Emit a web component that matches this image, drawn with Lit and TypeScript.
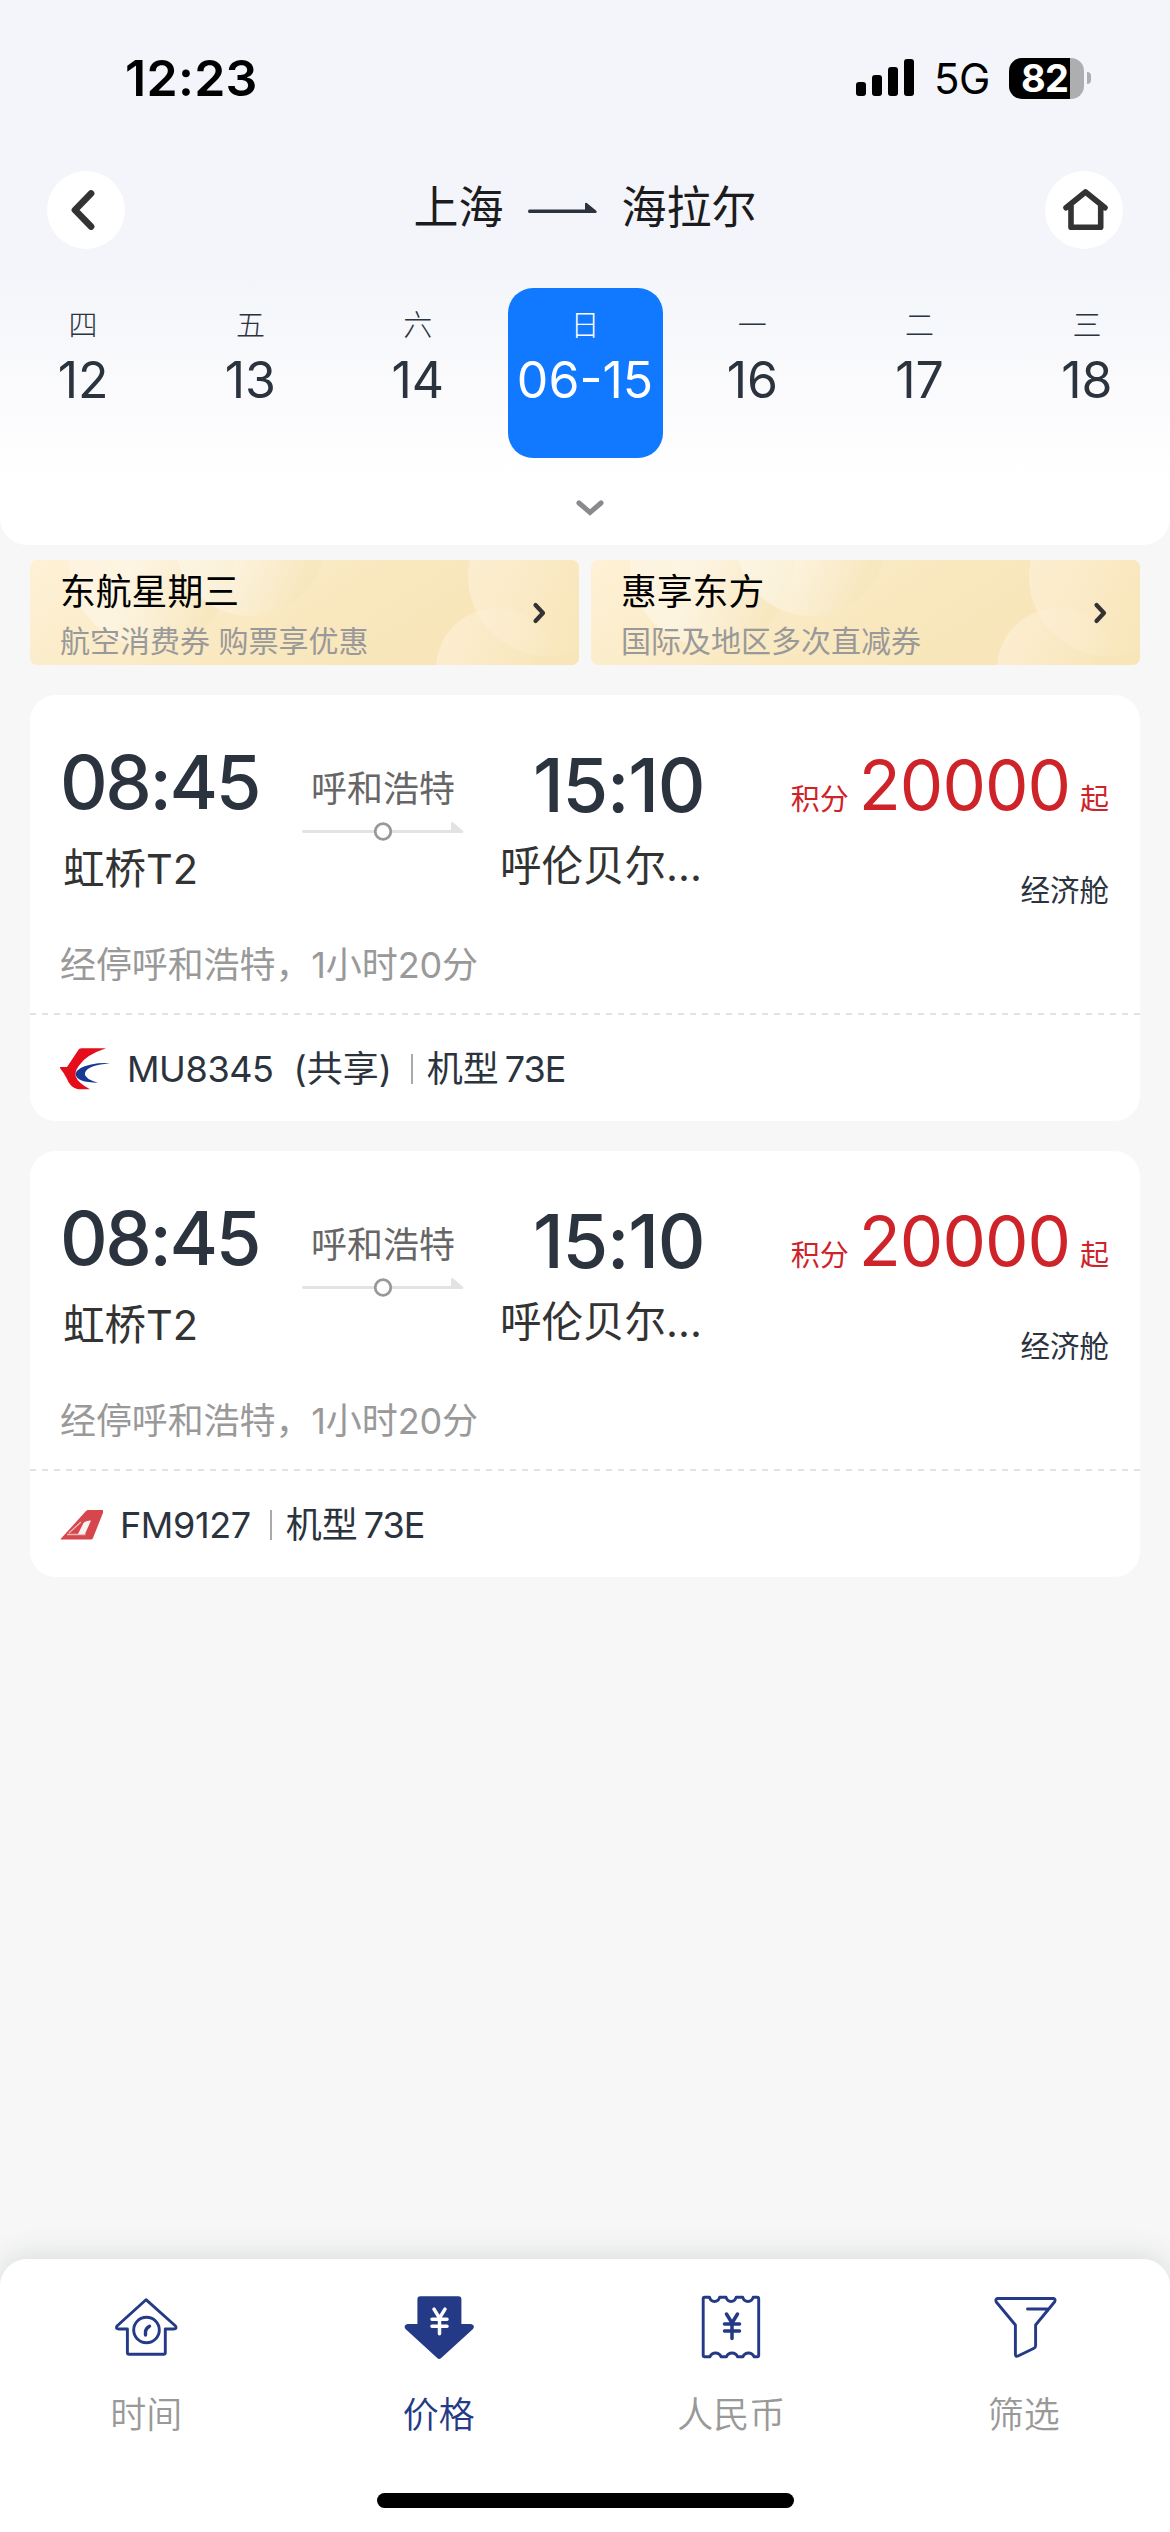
import { LitElement, html, css, svg } from "lit";
import { customElement, property } from "lit/decorators.js";
import { classMap } from "lit/directives/class-map.js";

interface Flight {
  code: string;
  shared: boolean;
  airline: "mu" | "fm";
}

const days = [
  ["四", "12"], ["五", "13"], ["六", "14"], ["日", "06-15"],
  ["一", "16"], ["二", "17"], ["三", "18"],
];

const promos = [
  ["东航星期三", "航空消费券 购票享优惠"],
  ["惠享东方", "国际及地区多次直减券"],
];

const flights: Flight[] = [
  { code: "MU8345", shared: true, airline: "mu" },
  { code: "FM9127", shared: false, airline: "fm" },
];

const yen = (x: number, y: number, c: string) => svg`
  <path d="M${x - 5.5} ${y - 12}L${x} ${y - 3}L${x + 5.5} ${y - 12}M${x} ${y - 3}V${y + 12.5}M${x - 7.5} ${y - 2}H${x + 7.5}M${x - 7.5} ${y + 5}H${x + 7.5}"
    fill="none" stroke=${c} stroke-width="3.5" stroke-linecap="round" stroke-linejoin="round"/>`;

const tabIcons = [
  svg`<g fill="none" stroke="#243a86" stroke-width="2.9" stroke-linejoin="round" stroke-linecap="round">
    <path d="M36 7.700L65.500 34Q67.500 37 63.500 37H55.300V60.500Q55.300 62.300 53.500 62.300H19.200Q17.400 62.300 17.400 60.500V37H9Q5 37 7 34Z"/>
    <circle cx="36.500" cy="38" r="12.800"/>
    <path d="M35.500 43V39.500Q36 36 39.500 34.300" stroke-width="3.400"/></g>`,
  svg`<path d="M17.400 4.300H55.400Q58.400 4.300 58.400 7.300V32H68Q72.500 33 70 37L38.200 66Q36.200 67.800 34.200 66L2.500 37Q0 33 4.500 32H14.400V7.300Q14.400 4.300 17.400 4.300Z" fill="#243a86"/>
    ${yen(36.5, 29.2, "#fff")}`,
  svg`<path d="M9.700 5.200H14.500C16 11 23 11 24.700 5.200H31C32.700 11 39.500 11 41.200 5.200H47.700C49.300 11 56.500 11 58.200 5.200H62.200Q63.700 5.200 63.700 6.700V63.300Q63.700 64.800 62.200 64.800H59C57 59.800 50 59.800 48 64.800H42.500C40.500 59.800 33.500 59.800 31.500 64.800H26C24 59.800 17 59.800 15 64.800H9.700Q8.200 64.800 8.200 63.300V6.700Q8.200 5.200 9.700 5.200Z"
      fill="none" stroke="#243a86" stroke-width="2.900" stroke-linejoin="round"/>
    ${yen(37, 34, "#243a86")}`,
  svg`<path d="M9.500 6.500H65.500Q68 7 66.500 10L47.600 33V53.500Q47.600 55.500 46 56.300L30 64Q27.500 65 27.400 62.500V33L8.300 10Q7 7 9.500 6.500ZM39.500 17H59.500"
      fill="none" stroke="#243a86" stroke-width="2.900" stroke-linejoin="round" stroke-linecap="round"/>`,
];

const tabs = ["时间", "价格", "人民币", "筛选"];

const baseText = css`
  :host {
    font-family: Inter, "Noto Sans CJK SC", sans-serif;
    box-sizing: border-box;
  }
  *, *::before, *::after { box-sizing: border-box; }
  svg { display: block; flex: none; }
`;

@customElement("status-bar")
export class StatusBar extends LitElement {
  static styles = [baseText, css`
    :host { display: flex; align-items: center; height: 156px; padding: 0 79px 0 125px; color: #000; }
    .clock { font-size: 50px; font-weight: 600; letter-spacing: 0.3px; flex: 1; }
    .network { font-size: 42px; font-weight: 400; line-height: 42px; margin: 1px 19px 0 20px; letter-spacing: -0.4px; }
    .battery { display: flex; align-items: center; gap: 3px; }
    .level {
      width: 75px; height: 41px; border-radius: 13px; color: #fff;
      background: linear-gradient(90deg, #000 61px, #adaeb0 61px);
      font-size: 38px; font-weight: 700; line-height: 41px; padding-left: 12px; letter-spacing: -0.8px;
    }
    .nub { width: 4px; height: 12px; border-radius: 0 4px 4px 0; background: #adaeb0; }
  `];
  render() {
    return html`
      <span class="clock">12:23</span>
      <svg width="58" height="38" viewBox="0 0 58 38">
        <rect x="0" y="23" width="10" height="14" rx="3"/>
        <rect x="16" y="16" width="10" height="21" rx="3"/>
        <rect x="32" y="8" width="10" height="29" rx="3"/>
        <rect x="48" y="0" width="10" height="37" rx="3"/>
      </svg>
      <span class="network">5G</span>
      <span class="battery"><span class="level">82</span><span class="nub"></span></span>`;
  }
}

@customElement("route-bar")
export class RouteBar extends LitElement {
  static styles = [baseText, css`
    :host { display: flex; align-items: center; justify-content: space-between; height: 108px; padding: 0 47px; }
    .round { width: 78px; height: 78px; border-radius: 50%; background: #fff; display: grid; place-items: center; }
    .title { display: flex; align-items: center; gap: 24.500px; font-size: 45px; line-height: 60px; color: #1c1c1e; margin-top: -4px; }
  `];
  render() {
    return html`
      <div class="round">
        <svg width="78" height="78" viewBox="0 0 78 78"><path d="M44 22.500L28 39L44 55.500" fill="none" stroke="#333" stroke-width="6.800" stroke-linecap="round" stroke-linejoin="round"/></svg>
      </div>
      <div class="title">
        <span>上海</span>
        <svg width="69" height="12" viewBox="0 0 69 12"><path d="M1 7.500H57V1.500Q58 0 60 2L68 8.500Q70 11 67 11H1Q-1 9.500 1 7.500Z" fill="#2b333e"/></svg>
        <span>海拉尔</span>
      </div>
      <div class="round">
        <svg width="78" height="78" viewBox="0 0 78 78"><path d="M21 36.700L40.500 21L60 36.700M26 35V56.300H55.700V35" fill="none" stroke="#333" stroke-width="5.600" stroke-linecap="round" stroke-linejoin="round"/></svg>
      </div>`;
  }
}

@customElement("date-strip")
export class DateStrip extends LitElement {
  static styles = [baseText, css`
    :host { display: block; }
    .days { display: grid; grid-template-columns: repeat(7, 167.300px); justify-content: center; }
    .day { display: flex; flex-direction: column; align-items: center; justify-self: center; width: 155px; height: 170px; border-radius: 25px; padding-top: 19px; color: #2b333e; }
    .active { background: #1079ff; color: #fff; }
    .week { font-size: 29px; font-weight: 300; line-height: 38px; }
    .date { font-size: 50px; line-height: 60px; margin-top: 5px; white-space: nowrap; }
    .more { display: flex; justify-content: center; padding: 41px 0 0 9px; }
  `];
  render() {
    return html`
      <div class="days">
        ${days.map(([week, date], i) => html`
          <div class=${classMap({ day: true, active: i === 3 })}>
            <span class="week">${week}</span><span class="date">${date}</span>
          </div>`)}
      </div>
      <div class="more">
        <svg width="28" height="18" viewBox="0 0 28 18"><path d="M3 4L14 13.500L25 4" fill="none" stroke="#8a8a8e" stroke-width="5" stroke-linecap="round"/></svg>
      </div>`;
  }
}

@customElement("promo-card")
export class PromoCard extends LitElement {
  @property() heading = "";
  @property() detail = "";
  static styles = [baseText, css`
    :host { display: grid; height: 105px; border-radius: 7px; overflow: hidden; }
    .art, .body { grid-area: 1 / 1; }
    .body { display: flex; align-items: center; justify-content: space-between; padding: 0 30px; }
    .words { padding-top: 9px; }
    .heading { font-size: 35.800px; line-height: 44px; color: #000; margin-top: -3px; }
    .detail { font-size: 30px; line-height: 40px; color: #999; margin-top: 7px; white-space: pre; }
  `];
  render() {
    return html`
      <svg class="art" width="549" height="105" viewBox="0 0 549 105">
        <defs>
          <linearGradient id="base" x1="0" y1="0" x2="1" y2="0.300"><stop offset="0" stop-color="#fef1d6"/><stop offset=".6" stop-color="#f9e8bf"/><stop offset="1" stop-color="#f8e5b8"/></linearGradient>
          <linearGradient id="soft" x1="0" y1="0" x2="1" y2=".4"><stop offset="0" stop-color="#fff" stop-opacity=".2"/><stop offset=".5" stop-color="#fff" stop-opacity=".4"/><stop offset="1" stop-color="#f6e6bd" stop-opacity=".5"/></linearGradient>
          <linearGradient id="fade" x1="0" y1="0" x2="1" y2="0.300"><stop offset="0" stop-color="#fdf0d8" stop-opacity=".8"/><stop offset="1" stop-color="#fdf0d8" stop-opacity="0"/></linearGradient>
        </defs>
        <rect width="549" height="105" fill="url(#base)"/>
        <circle cx="121" cy="5" r="82" fill="url(#soft)"/>
        <circle cx="220" cy="-19" r="75" fill="url(#soft)"/>
        <circle cx="518" cy="16" r="80" fill="url(#fade)"/>
        <circle cx="467" cy="109" r="61" fill="url(#fade)"/>
      </svg>
      <div class="body">
        <div class="words"><div class="heading">${this.heading}</div><div class="detail">${this.detail}</div></div>
        <svg width="20" height="26" viewBox="0 0 20 26"><path d="M6.500 5L14 13L6.500 21" fill="none" stroke="#333" stroke-width="4.200" stroke-linecap="round" stroke-linejoin="round"/></svg>
      </div>`;
  }
}

@customElement("flight-card")
export class FlightCard extends LitElement {
  @property({ attribute: false }) flight!: Flight;
  static styles = [baseText, css`
    :host { display: block; height: 426px; border-radius: 26px; background: #fff; overflow: hidden; }
    .top { display: grid; grid-template-columns: 222px 200px 1fr auto; height: 212px; padding: 0 31px 0 30px; }
    .time { font-size: 74px; font-weight: 500; line-height: 80px; color: #2b333e; letter-spacing: -2.4px; white-space: nowrap; }
    .dep { padding-top: 47px; }
    .arr { padding-top: 50px; }
    .arr .time { padding-left: 51px; letter-spacing: -1.2px; }
    .place { font-size: 41.500px; line-height: 54px; color: #333; white-space: nowrap; }
    .dep .place { padding: 20px 0 0 3px; }
    .arr .place { padding: 14px 0 0 18px; }
    .via { display: flex; flex-direction: column; align-items: center; padding-top: 71px; margin-right: -2px; color: #666; font-size: 36px; line-height: 46px; }
    .via svg { margin-top: 9px; }
    .fare { display: flex; flex-direction: column; align-items: flex-end; color: #cf232a; padding-top: 50px; }
    .price { display: flex; align-items: baseline; line-height: 80px; font-size: 29px; }
    .points { font-size: 69px; letter-spacing: -1px; margin: 0 10px 0 10px; }
    .cabin { font-size: 29.500px; line-height: 40px; margin-top: 30px; color: #2b333e; }
    .stop { height: 106px; padding: 35px 30px 0; font-size: 36px; line-height: 46px; color: #999; letter-spacing: -0.1px; }
    .dash { height: 2px; background: repeating-linear-gradient(90deg, #e3e3e3 0 6px, transparent 6px 12px); }
    .info { display: flex; align-items: center; height: 106px; padding: 1px 30px 0; font-size: 36px; line-height: 46px; color: #2b333e; white-space: nowrap; }
    .code { margin-left: 17px; letter-spacing: -0.4px; }
    .shared { margin-left: 20px; }
    .bar { width: 2px; height: 30px; background: #aaa; margin: 0 14px 0 19px; }
    .type { margin-left: 6px; letter-spacing: -1px; }
  `];
  logo() {
    return this.flight.airline === "mu"
      ? html`<svg width="50" height="42" viewBox="0 0 50 42">
          <path d="M46 .3H21.500Q19 .3 18 2.500L7 19H.5Q-.5 19 .3 20.500Q4 25 6.500 30Q10 39.500 18 41.300H30Q18 35 15.800 28.500Q14.500 23 19.500 17Q26 7 46 .3Z" fill="#e60d1b"/>
          <path d="M50 15.300Q41 14.500 31 16.500Q16.500 19.500 15.500 26Q16.500 34.500 38 34.700Q25 31 24.800 26Q25.500 17.500 50 15.300Z" fill="#163a91"/></svg>`
      : html`<svg width="43" height="30" viewBox="0 0 43 30">
          <path d="M28 0H43Q44 0 43.500 1.500L33 28Q32.500 29.500 31 29.500H1Q0 29.500 1.500 28L26 1Q27 0 28 0Z" fill="#d5464d"/>
          <path d="M18 24L23.500 13Q25.500 10.500 31 10.500L25 24Z" fill="#fff" opacity=".92"/>
          <path d="M7 24.500H25.500M9 23L21 12" fill="none" stroke="#fff" stroke-width="1.300" opacity=".6"/></svg>`;
  }
  render() {
    const f = this.flight;
    return html`
      <div class="top">
        <div class="dep"><div class="time">08:45</div><div class="place">虹桥T2</div></div>
        <div class="via"><span>呼和浩特</span>
          <svg width="162" height="20" viewBox="0 0 162 20">
            <path d="M1 9H149V2Q150 0 152 2L160 9Q163 11 160 12H1Q-1 10.500 1 9Z" fill="#e3e3e3"/>
            <circle cx="81" cy="10.500" r="7.800" fill="#fff" stroke="#999" stroke-width="2.800"/></svg>
        </div>
        <div class="arr"><div class="time">15:10</div><div class="place">呼伦贝尔...</div></div>
        <div class="fare">
          <div class="price"><span>积分</span><span class="points">20000</span><span>起</span></div>
          <div class="cabin">经济舱</div>
        </div>
      </div>
      <div class="stop">经停呼和浩特，1小时20分</div>
      <div class="dash"></div>
      <div class="info">
        ${this.logo()}
        <span class="code">${f.code}</span>
        ${f.shared ? html`<span class="shared">(共享)</span>` : ""}
        <span class="bar"></span><span>机型</span><span class="type">73E</span>
      </div>`;
  }
}

@customElement("tab-bar")
export class TabBar extends LitElement {
  static styles = [baseText, css`
    :host { display: flex; flex-direction: column; align-items: center; height: 273px; border-radius: 27px 27px 0 0; background: #fff; box-shadow: 0 -4px 30px rgba(30, 45, 65, .13); }
    .tabs { display: grid; grid-template-columns: repeat(4, 292.500px); height: 234px; padding-top: 33px; }
    .tab { display: flex; flex-direction: column; align-items: center; gap: 27.500px; font-size: 36px; line-height: 46px; color: #999; font-weight: 350; }
    .on { color: #243a86; }
    .home { width: 417px; height: 15px; border-radius: 8px; background: #000; }
  `];
  render() {
    return html`
      <div class="tabs">
        ${tabs.map((t, i) => html`
          <div class=${classMap({ tab: true, on: i === 1 })}>
            <svg width="72" height="72" viewBox="0 0 72 72">${tabIcons[i]}</svg><span>${t}</span>
          </div>`)}
      </div>
      <div class="home"></div>`;
  }
}

@customElement("app-root")
export class AppRoot extends LitElement {
  static styles = [baseText, css`
    :host { display: flex; flex-direction: column; width: 1170px; height: 2532px; background: #f7f7f7; overflow: hidden; }
    .head { height: 545px; border-radius: 0 0 27px 27px; background: linear-gradient(#f4f5fa 270px, #fff 480px); }
    .dates { margin-top: 24px; }
    .promos { display: grid; grid-template-columns: 549px 549px; gap: 12px; padding: 15px 30px 30px; }
    .list { display: flex; flex-direction: column; gap: 30px; padding: 0 30px; flex: 1; }
  `];
  render() {
    return html`
      <header class="head">
        <status-bar></status-bar>
        <route-bar></route-bar>
        <date-strip class="dates"></date-strip>
      </header>
      <section class="promos">
        ${promos.map(([h, d]) => html`<promo-card .heading=${h} .detail=${d}></promo-card>`)}
      </section>
      <main class="list">${flights.map((f) => html`<flight-card .flight=${f}></flight-card>`)}</main>
      <tab-bar></tab-bar>`;
  }
}
